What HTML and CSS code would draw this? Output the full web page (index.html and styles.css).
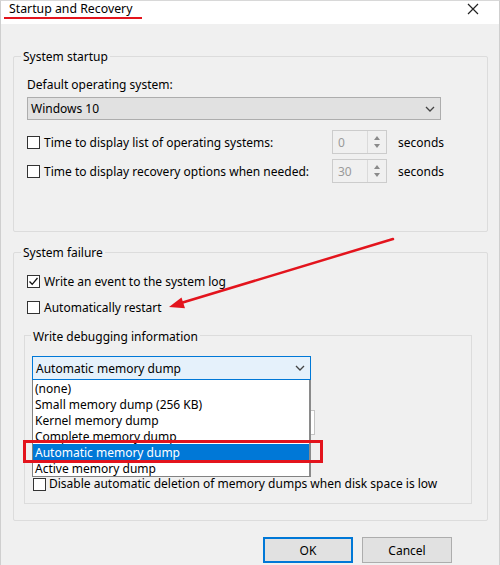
FILE: index.html
```html
<!DOCTYPE html>
<html>
<head>
<meta charset="utf-8">
<link rel="stylesheet" href="styles.css">
</head>
<body>
<div class="window">
  <div class="titlebar">
    <span class="title">Startup and Recovery</span>
    <svg class="close" width="12" height="12" viewBox="0 0 12 12"><path d="M1 1 L11 11 M11 1 L1 11" stroke="#222" stroke-width="1.2" fill="none"/></svg>
  </div>
  <div class="content">
    <div class="group g-startup">
      <div class="legend">System startup</div>
      <div class="label">Default operating system:</div>
      <div class="select os-select">
        <span>Windows 10</span>
        <svg class="chev" width="10" height="6" viewBox="0 0 10 6"><path d="M1 1 L5 5 L9 1" stroke="#444" stroke-width="1.3" fill="none"/></svg>
      </div>
      <div class="row">
        <span class="check"></span>
        <span class="row-text">Time to display list of operating systems:</span>
        <span class="spin"><span class="spin-val">0</span><span class="spin-btns"><svg width="6" height="4" viewBox="0 0 6 4"><path d="M0 4 L3 0 L6 4Z" fill="#8a8a8a"/></svg><svg width="6" height="4" viewBox="0 0 6 4"><path d="M0 0 L3 4 L6 0Z" fill="#8a8a8a"/></svg></span></span>
        <span class="unit">seconds</span>
      </div>
      <div class="row row2">
        <span class="check"></span>
        <span class="row-text">Time to display recovery options when needed:</span>
        <span class="spin"><span class="spin-val">30</span><span class="spin-btns"><svg width="6" height="4" viewBox="0 0 6 4"><path d="M0 4 L3 0 L6 4Z" fill="#8a8a8a"/></svg><svg width="6" height="4" viewBox="0 0 6 4"><path d="M0 0 L3 4 L6 0Z" fill="#8a8a8a"/></svg></span></span>
        <span class="unit">seconds</span>
      </div>
    </div>

    <div class="group g-failure">
      <div class="legend">System failure</div>
      <div class="cb-line first">
        <span class="check"><svg width="11" height="11" viewBox="0 0 11 11"><path d="M1.5 5.5 L4.2 8.3 L9.5 2" stroke="#111" stroke-width="1.3" fill="none"/></svg></span>
        <span>Write an event to the system log</span>
      </div>
      <div class="cb-line second">
        <span class="check"></span>
        <span>Automatically restart</span>
      </div>

      <div class="subgroup">
        <div class="legend sublegend">Write debugging information</div>
        <div class="dd-wrap">
          <div class="select dump-select">
            <span>Automatic memory dump</span>
            <svg class="chev" width="10" height="6" viewBox="0 0 10 6"><path d="M1 1 L5 5 L9 1" stroke="#444" stroke-width="1.3" fill="none"/></svg>
          </div>
          <ul class="dd-list">
            <li>(none)</li>
            <li>Small memory dump (256 KB)</li>
            <li>Kernel memory dump</li>
            <li>Complete memory dump</li>
            <li class="selected">Automatic memory dump</li>
            <li>Active memory dump</li>
          </ul>
          <div class="highlight-box"></div>
        </div>
        <div class="hidden-area">
          <div class="dumpfile"></div>
        </div>
        <div class="cb-line disable">
          <span class="check"></span>
          <span class="disable-text">Disable automatic deletion of memory dumps when disk space is low</span>
        </div>
      </div>
    </div>

    <div class="buttons">
      <button class="btn default">OK</button>
      <button class="btn">Cancel</button>
    </div>
  </div>

  <svg class="arrow" width="500" height="565" viewBox="0 0 500 565">
    <line x1="392" y1="238" x2="180" y2="302" stroke="#e3141d" stroke-width="2.5" stroke-linecap="round"/>
    <path d="M168 306 L180.5 296.6 L184 307.2 Z" fill="#e3141d"/>
  </svg>
</div>
</body>
</html>
```

FILE: styles.css
```css
* { box-sizing: border-box; }
html, body { margin: 0; padding: 0; }
body {
  width: 500px;
  height: 565px;
  overflow: hidden;
  background: #f0f0f0;
  font-family: "Noto Sans", "Open Sans", sans-serif;
  font-size: 12px;
  color: #000;
}
.window {
  position: relative;
  width: 500px;
  height: 565px;
  border-left: 1px solid #cfcfcf;
  border-right: 1px solid #cfcfcf;
  border-top: 1px solid #d8d8d8;
}
.titlebar {
  height: 23px;
  background: #fff;
  display: flex;
  align-items: flex-start;
  justify-content: space-between;
  padding: 0 20px 0 3px;
}
.title {
  font-size: 12.3px;
  line-height: 16px;
  padding: 0 10px 0 5px;
  border-bottom: 2px solid #e3141d;
}
.close { margin-top: 2px; }

.content { padding: 0 11px 0 12px; }

.group {
  border: 1px solid #dcdcdc;
  border-radius: 2px;
}
.legend {
  display: table;
  background: #f0f0f0;
  line-height: 16px;
  height: 16px;
  margin: -8px 0 0 -6px;
  padding: 0 2px;
}
.g-startup {
  margin-top: 32px;
  padding: 0 0 48px 13px;
}
.label { margin-top: 12px; line-height: 16px; }
.select {
  display: flex;
  align-items: center;
  justify-content: space-between;
  border: 1px solid #adadad;
  background: #e1e1e1;
  padding: 0 5px 0 3px;
}
.os-select { width: 414px; height: 23px; margin-top: 4px; }
.row {
  display: flex;
  align-items: center;
  height: 24px;
  margin-top: 10px;
}
.row2 { margin-top: 5px; }
.check {
  width: 13px;
  height: 13px;
  border: 1px solid #333;
  background: #fff;
  flex: none;
  display: flex;
  align-items: center;
  justify-content: center;
}
.row-text { width: 288px; margin-left: 4px; }
.spin {
  display: flex;
  width: 55px;
  height: 24px;
  border: 1px solid #cccccc;
  background: #f0f0f0;
}
.spin-val { flex: 1; color: #9a9a9a; padding: 3px 0 0 5px; }
.spin-btns {
  width: 19px;
  border-left: 1px solid #dadada;
  display: flex;
  flex-direction: column;
  justify-content: space-around;
  align-items: center;
  padding: 3px 0;
}
.unit { margin-left: 11px; }

.g-failure {
  margin-top: 20px;
  padding: 0 15px 16px 13px;
}
.cb-line { display: flex; align-items: center; height: 16px; gap: 4px; }
.cb-line.first { margin-top: 12px; }
.cb-line.second { margin-top: 10px; }

.subgroup {
  margin: 20px 0 0 -3px;
  border: 1px solid #dcdcdc;
  padding: 0 0 12px 7px;
}
.legend.sublegend { margin-left: -1px; margin-top: -7px; }
.dd-wrap { position: relative; width: 279px; margin-top: 11px; }
.dump-select {
  height: 24px;
  background: #e5f1fb;
  border-color: #0078d7;
}
.dd-list {
  position: absolute;
  left: 0;
  top: 24px;
  width: 279px;
  margin: 0;
  padding: 0;
  list-style: none;
  background: #fff;
  border: 1px solid #828282;
  border-top: none;
  border-right: 2px solid #8a8a8a;
  z-index: 2;
}
.dd-list li { height: 16px; line-height: 14px; padding: 2px 0 0 2px; white-space: nowrap; }
.dd-list li.selected { background: #0078d7; color: #fff; }
.highlight-box {
  position: absolute;
  left: -9px;
  top: 84px;
  width: 300px;
  height: 23px;
  border: 3px solid #e3141d;
  z-index: 3;
}
.hidden-area { height: 96px; padding-top: 30px; }
.dumpfile {
  width: 283px;
  height: 25px;
  border: 1px solid #c4c4c4;
  background: #fff;
}
.cb-line.disable { padding-left: 1px; gap: 3px; height: 14px; margin-top: 1px; }
.disable-text { line-height: 12px; }

.buttons {
  display: flex;
  justify-content: flex-end;
  gap: 9px;
  margin-top: 16px;
  padding-right: 36px;
}
.btn {
  width: 90px;
  height: 26px;
  font: inherit;
  font-size: 12px;
  background: #e1e1e1;
  border: 1px solid #adadad;
  color: #000;
  padding: 0;
}
.btn.default { border: 2px solid #0078d7; }

.arrow {
  position: absolute;
  left: 0;
  top: 0;
  pointer-events: none;
  z-index: 5;
}
```
